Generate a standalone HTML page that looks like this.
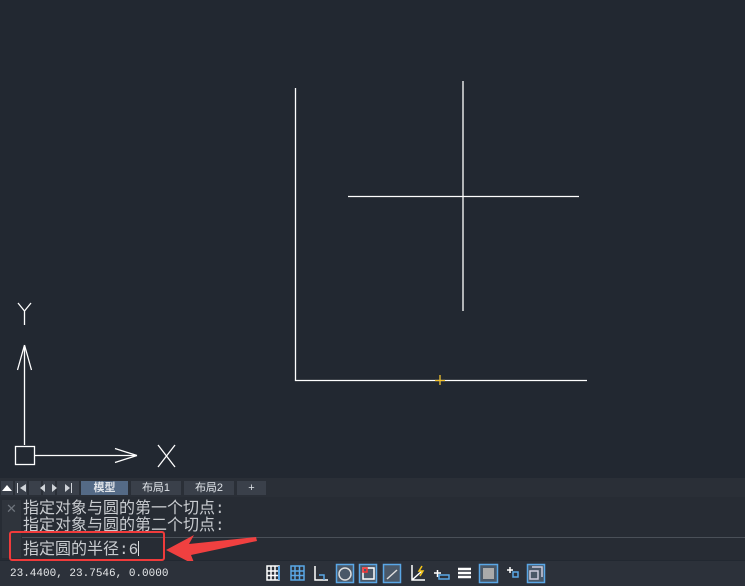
<!DOCTYPE html>
<html><head><meta charset="utf-8"><style>
body{margin:0;width:745px;height:586px;overflow:hidden;background:#222831;font-family:"Liberation Sans","Noto Sans CJK SC",sans-serif;position:relative}
.a{position:absolute}
.tab{position:absolute;top:481px;height:14px;background:#3a404a;color:#dfe3e8;font-size:11px;line-height:14px;text-align:center}
.cmd{position:absolute;left:23px;color:#c9ccd0;font-size:16px;line-height:16px;font-family:"Liberation Mono","Noto Sans CJK SC",monospace;white-space:nowrap}
.nb{position:absolute;top:481px;height:14px;width:12px;background:#3a404a}
</style></head><body>
<svg class="a" style="left:0;top:0" width="745" height="586">
<g stroke="#fff" stroke-width="1.3" fill="none">
<path d="M295.5 88V380.5H587"/>
<path d="M463 81V311M348 196.5H579"/>
<path d="M24.5 445V345M24.5 345l-7 25M24.5 345l7 25"/>
<rect x="15.5" y="446.5" width="19" height="18"/>
<path d="M34.5 455.5H137M137 455.5l-22-7M137 455.5l-22 7"/>
<path d="M18 303l6.5 8 6.5-8M24.5 311v14"/>
<path d="M158 445l17 22M175 445l-17 22"/>
</g>
<path d="M440 375v10M435 380.5h10" stroke="#f2c22c" stroke-width="1.3"/>
</svg>
<div class="a" style="left:0;top:478px;width:745px;height:19px;background:#2a2f37"></div>
<div class="nb" style="left:1px"></div><div class="nb" style="left:15px"></div><div class="nb" style="left:29px"></div><div class="nb" style="left:43px"></div><div class="nb" style="left:57px"></div><div class="nb" style="left:67px"></div>
<svg class="a" style="left:0;top:481px" width="80" height="14" fill="#cfd3d8">
<path d="M2 10l5-6 5 6z" fill="#fff"/><path d="M17 2h1v10h-1zM26 3l-6 4 6 4z"/>
<path d="M45 3l-5 4 5 4z"/><path d="M52 3l5 4-5 4z"/><path d="M65 3l5 4-5 4zM71 2h1v10h-1z"/>
</svg>
<div class="tab" style="left:81px;width:47px;background:#546a86;font-weight:bold">模型</div>
<div class="tab" style="left:131px;width:50px">布局1</div>
<div class="tab" style="left:184px;width:50px">布局2</div>
<div class="tab" style="left:237px;width:29px">+</div>
<div class="a" style="left:0;top:497px;width:745px;height:63px;background:#272c34"></div>
<div class="a" style="left:2px;top:500px;width:19px;height:58px;background:#2f343c;color:#6f757d;font-size:13px;text-align:center;line-height:18px">✕</div>
<div class="a" style="left:22px;top:537px;width:723px;height:1px;background:#4a5058"></div>
<div class="cmd" style="top:501px">指定对象与圆的第一个切点:</div>
<div class="cmd" style="top:518px">指定对象与圆的第二个切点:</div>
<div class="cmd" style="top:541px">指定圆的半径:6<span style="display:inline-block;width:1px;height:15px;background:#ddd;vertical-align:-2px"></span></div>
<div class="a" style="left:9px;top:531px;width:156px;height:30px;border:2px solid #f03b3b;border-radius:3px;box-sizing:border-box"></div>
<svg class="a" style="left:0;top:0" width="745" height="586"><path d="M166 550L194 535L189 544L256 537L257 541L191 555L195 565Z" fill="#f04040"/></svg>
<div class="a" style="left:0;top:561px;width:745px;height:25px;background:#2c313a"></div>
<div class="a" style="left:10px;top:568px;color:#e6e8ea;font-size:11px;font-family:'Liberation Mono',monospace">23.4400, 23.7546, 0.0000</div>
<svg class="a" style="left:260px;top:562px" width="300" height="24" fill="none" stroke-width="1.5">
<g stroke="#fff"><path d="M7 4h12v14H7zM7 9h12M7 13.5h12M11 4v14M15 4v14"/></g>
<path d="M19 4v14" stroke="#5aa7e6" stroke-width="2"/>
<g stroke="#5aa7e6"><path d="M31 4h13v14H31zM31 9h13M31 13.5h13M35 4v14M39.5 4v14"/></g>
<path d="M55 4v14h13" stroke="#fff"/><path d="M59 13h5v5" stroke="#5aa7e6"/>
<rect x="76.5" y="2.5" width="17" height="18" fill="#4a5868" stroke="#5aa7e6"/><circle cx="85" cy="12" r="6" stroke="#ddd"/>
<rect x="99.5" y="2.5" width="17" height="18" fill="#4a5868" stroke="#5aa7e6"/><rect x="103" y="6" width="11" height="11" stroke="#fff"/><rect x="103" y="6" width="4" height="4" stroke="#f33"/>
<rect x="123.5" y="2.5" width="17" height="18" fill="#4a5868" stroke="#5aa7e6"/><path d="M127 17l10-9" stroke="#ddd"/>
<path d="M152 3v15h13M152 18l10-9" stroke="#fff"/><path d="M162 4l-3 5h4l-3 5" stroke="#f5c518"/>
<path d="M174 11h7M177.5 8v7" stroke="#fff"/><rect x="179" y="13" width="10" height="4" stroke="#5aa7e6"/>
<path d="M198 7h13M198 11h13M198 15h13" stroke="#fff" stroke-width="2.5"/>
<rect x="219.5" y="2.5" width="18" height="18" fill="#4a5868" stroke="#5aa7e6"/><rect x="223" y="6" width="11" height="11" fill="#aaa"/>
<path d="M247 8h6M250 5v6" stroke="#fff"/><rect x="253" y="10" width="5" height="5" stroke="#5aa7e6"/>
<rect x="267.5" y="2.5" width="17" height="18" fill="#4a5868" stroke="#5aa7e6"/><path d="M272 5h10v10M270 9h8v8h-8z" stroke="#ccd"/>
</svg>
</body></html>
